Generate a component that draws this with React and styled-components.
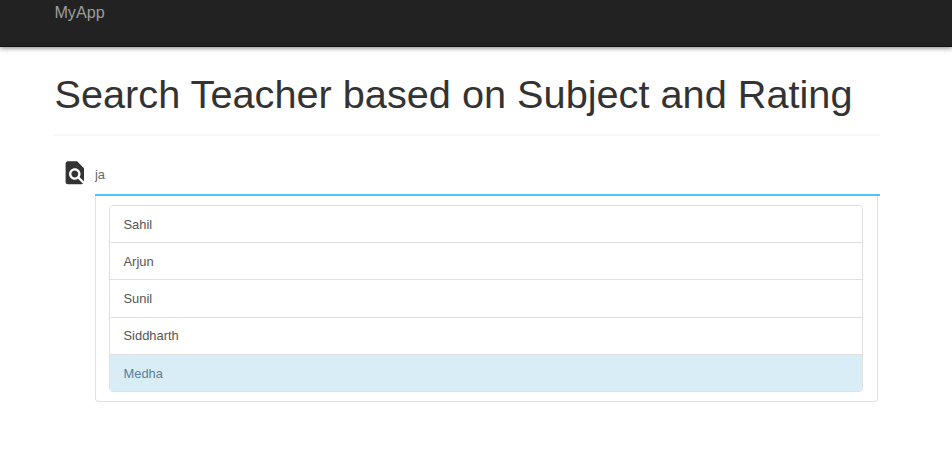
import React from "react";
import styled, { createGlobalStyle } from "styled-components";

const GlobalStyle = createGlobalStyle`
  *, *::before, *::after { box-sizing: border-box; }
  body {
    margin: 0;
    background: #fff;
    color: #333;
    font-family: "Liberation Sans", Arial, sans-serif;
    font-size: 13px;
  }
`;

const Navbar = styled.nav`
  height: 47px;
  padding: 2px 54.4px 0;
  background: #222;
  border-bottom: 1px solid #101010;
  box-shadow: 0 1px 5px rgba(0, 0, 0, 0.5);
`;

const Brand = styled.a`
  display: inline-block;
  color: #9d9d9d;
  font-size: 16.2px;
  line-height: 21px;
  text-decoration: none;
`;

const Container = styled.main`
  width: 826px;
  margin-left: 54px;
`;

const PageHeader = styled.header`
  height: 89px;
  padding: 24px 0 0 0.5px;
  border-bottom: 2px solid #f6f6f6;
`;

const Title = styled.h1`
  margin: 0;
  font-size: 39.7px;
  font-weight: 500;
  line-height: 47px;
  white-space: nowrap;
`;

const SearchRow = styled.div`
  display: grid;
  grid-template-columns: 41px 1fr;
  height: 60px;
`;

const SearchIcon = styled.svg`
  width: 27.6px;
  height: 27.6px;
  margin: 22.5px 0 0 7px;
  fill: #333;
`;

const SearchInput = styled.input`
  width: 100%;
  height: 60px;
  padding: 18px 0 0;
  border: 0;
  border-bottom: 2px solid #4fc3f7;
  outline: 0;
  background: transparent;
  color: #666;
  font: 12.9px/20px "Liberation Sans", Arial, sans-serif;
`;

const Suggestions = styled.section`
  width: 783px;
  height: 206px;
  margin-left: 41px;
  padding: 9px 14px 0 13px;
  border: 1px solid #e0e0e0;
  border-top: 0;
  border-radius: 0 0 4px 4px;
`;

const List = styled.ul`
  margin: 0;
  padding: 0;
  list-style: none;
  height: 187px;
  display: grid;
  grid-template-rows: 37px 37px 38px 37px 36px;
  border: 1px solid #e0e0e0;
  border-radius: 4px;
  overflow: hidden;
`;

const Item = styled.li`
  padding: 0 13.5px;
  border-bottom: 1px solid #e0e0e0;
  background: ${(p) => (p.$active ? "#d9edf7" : "#fff")};
  color: ${(p) => (p.$active ? "#5b7f97" : "#555")};
  font-size: 12.9px;
  line-height: 37px;
  &:nth-child(4) { line-height: 35px; }
  &:last-child { border-bottom: 0; }
`;

const teachers = ["Sahil", "Arjun", "Sunil", "Siddharth", "Medha"];

export default function App() {
  return (
    <>
      <GlobalStyle />
      <Navbar>
        <Brand>MyApp</Brand>
      </Navbar>
      <Container>
        <PageHeader>
          <Title>Search Teacher based on Subject and Rating</Title>
        </PageHeader>
        <SearchRow>
          <SearchIcon viewBox="0 0 24 24" aria-hidden="true">
            <path d="M20 19.59V8l-6-6H6c-1.1 0-1.99.9-1.99 2L4 20c0 1.1.89 2 1.99 2H18c.45 0 .85-.15 1.19-.4l-4.43-4.43c-.8.52-1.74.83-2.76.83-2.76 0-5-2.24-5-5s2.24-5 5-5 5 2.24 5 5c0 1.02-.31 1.96-.83 2.75L20 19.59zM9 13c0 1.66 1.34 3 3 3s3-1.34 3-3-1.34-3-3-3-3 1.34-3 3z" />
          </SearchIcon>
          <SearchInput defaultValue="ja" aria-label="Search" spellCheck={false} />
        </SearchRow>
        <Suggestions>
          <List>
            {teachers.map((name) => (
              <Item key={name} $active={name === "Medha"}>{name}</Item>
            ))}
          </List>
        </Suggestions>
      </Container>
    </>
  );
}
